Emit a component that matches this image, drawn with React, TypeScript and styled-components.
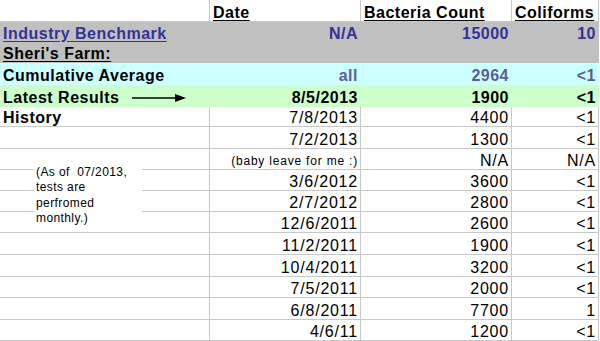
import { FC } from "react";
import styled, { createGlobalStyle } from "styled-components";

const GlobalStyle = createGlobalStyle`
  html, body {
    margin: 0;
    padding: 0;
    background: #ffffff;
  }
  body {
    font-family: "Liberation Sans", Arial, sans-serif;
  }
`;

type Band = "white" | "gray" | "cyan" | "green";

const bandColor: Record<Band, string> = {
  white: "#ffffff",
  gray: "#c0c0c0",
  cyan: "#ccffff",
  green: "#ccffcc",
};

const ROW_HEIGHTS = [22, 21, 20, 22, 22, 20, 22, 21, 21, 21, 21, 22, 22, 21, 22, 21];

const history = [
  { date: "7/8/2013", count: "4400", coli: "<1" },
  { date: "7/2/2013", count: "1300", coli: "<1" },
  { date: "(baby leave for me :)", count: "N/A", coli: "N/A", small: true },
  { date: "3/6/2012", count: "3600", coli: "<1" },
  { date: "2/7/2012", count: "2800", coli: "<1" },
  { date: "12/6/2011", count: "2600", coli: "<1" },
  { date: "11/2/2011", count: "1900", coli: "<1" },
  { date: "10/4/2011", count: "3200", coli: "<1" },
  { date: "7/5/2011", count: "2000", coli: "<1" },
  { date: "6/8/2011", count: "7700", coli: "1" },
  { date: "4/6/11", count: "1200", coli: "<1" },
];

const Arrow: FC = () => (
  <ArrowSvg width="54" height="10" viewBox="0 0 54 10">
    <line x1="0" y1="5" x2="44" y2="5" stroke="#000" strokeWidth="1.4" />
    <polygon points="43,1 54,5 43,9" fill="#000" />
  </ArrowSvg>
);

const App: FC = () => {
  return (
    <>
      <GlobalStyle />
      <Page>
        <Sheet>
          {/* header */}
          <Cell $band="white" />
          <Cell $band="white" $bold $underline>Date</Cell>
          <Cell $band="white" $bold $underline>Bacteria Count</Cell>
          <Cell $band="white" $bold $underline>Coliforms</Cell>

          {/* benchmark */}
          <Cell $band="gray" $bold $underline $color="#333399">Industry Benchmark</Cell>
          <Cell $band="gray" $bold $right $color="#333399">N/A</Cell>
          <Cell $band="gray" $bold $right $color="#333399">15000</Cell>
          <Cell $band="gray" $bold $right $color="#333399">10</Cell>

          <Cell $band="gray" $bold $underline>Sheri's Farm:</Cell>
          <Cell $band="gray" />
          <Cell $band="gray" />
          <Cell $band="gray" />

          <Cell $band="cyan" $bold>Cumulative Average</Cell>
          <Cell $band="cyan" $bold $right $color="#5c5c99">all</Cell>
          <Cell $band="cyan" $bold $right $color="#5c5c99">2964</Cell>
          <Cell $band="cyan" $bold $right $color="#5c5c99">&lt;1</Cell>

          <Cell $band="green" $bold>
            Latest Results
            <Arrow />
          </Cell>
          <Cell $band="green" $bold $right>8/5/2013</Cell>
          <Cell $band="green" $bold $right>1900</Cell>
          <Cell $band="green" $bold $right>&lt;1</Cell>

          {history.map((h, i) => (
            <Row key={h.date}>
              <Cell $band="white" $bold>{i === 0 ? "History" : ""}</Cell>
              <Cell $band="white" $right $small={h.small}>{h.date}</Cell>
              <Cell $band="white" $right>{h.count}</Cell>
              <Cell $band="white" $right>{h.coli}</Cell>
            </Row>
          ))}

          <Note>
            (As of&nbsp; 07/2013,
            <br />
            tests are
            <br />
            perfromed
            <br />
            monthly.)
          </Note>
        </Sheet>
      </Page>
    </>
  );
};

export default App;

const Page = styled.div`
  width: 600px;
  height: 341px;
  overflow: hidden;
  background: #ffffff;
`;

const Sheet = styled.div`
  position: relative;
  display: grid;
  grid-template-columns: 210px 151px 151px 87px;
  grid-template-rows: ${ROW_HEIGHTS.map((h) => `${h}px`).join(" ")};
`;

const Row = styled.div`
  display: contents;
`;

const Cell = styled.div<{
  $band: Band;
  $bold?: boolean;
  $underline?: boolean;
  $right?: boolean;
  $small?: boolean;
  $color?: string;
}>`
  box-sizing: border-box;
  display: flex;
  align-items: flex-end;
  justify-content: ${(p) => (p.$right ? "flex-end" : "flex-start")};
  padding: 0 2px 0 3px;
  overflow: hidden;
  white-space: nowrap;
  background: ${(p) => bandColor[p.$band]};
  border-right: 1px solid ${(p) => (p.$band === "white" ? "#c8c8c8" : "transparent")};
  border-bottom: 1px solid ${(p) => (p.$band === "white" ? "#c8c8c8" : "transparent")};
  color: ${(p) => p.$color ?? "#000000"};
  font-size: ${(p) => (p.$small ? "12px" : "16px")};
  line-height: ${(p) => (p.$small ? "16px" : "17px")};
  font-weight: ${(p) => (p.$bold ? 700 : 400)};
  letter-spacing: ${(p) => (p.$small ? "0.8px" : p.$bold ? "0.5px" : "0.8px")};
  text-decoration: ${(p) => (p.$underline ? "underline" : "none")};
  text-underline-offset: 2px;
`;

const ArrowSvg = styled.svg`
  margin: 0 0 3px 13px;
  flex-shrink: 0;
`;

const Note = styled.div`
  position: absolute;
  left: 34px;
  top: 156px;
  width: 108px;
  height: 72px;
  padding: 9px 0 0 2px;
  box-sizing: border-box;
  background: #ffffff;
  font-size: 12px;
  line-height: 15.3px;
  letter-spacing: 0.4px;
  color: #000000;
`;
